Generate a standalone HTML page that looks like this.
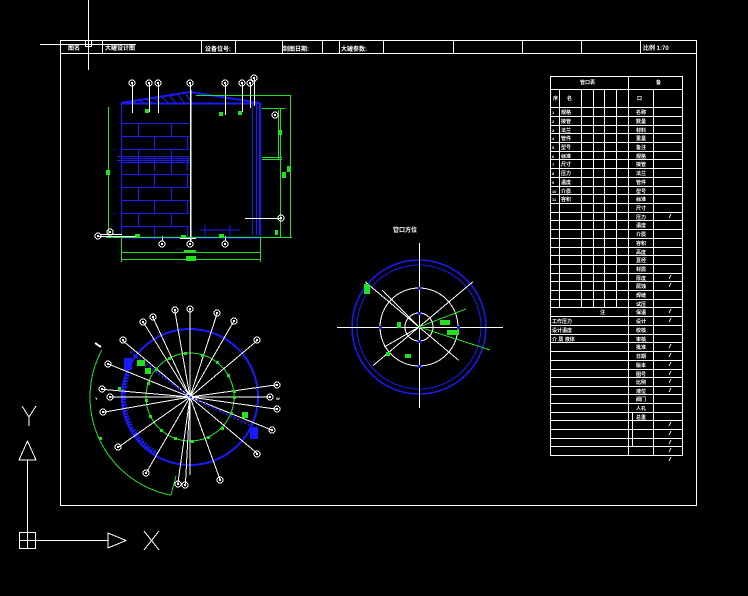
<!DOCTYPE html>
<html><head><meta charset="utf-8">
<style>
html,body{margin:0;padding:0;background:#000;width:748px;height:596px;overflow:hidden}
svg{display:block}
text{font-family:"Liberation Sans","Noto Sans CJK SC",sans-serif;fill:#fff;font-weight:bold}
</style></head>
<body>
<svg id="s" width="748" height="596" viewBox="0 0 748 596" xmlns="http://www.w3.org/2000/svg" shape-rendering="crispEdges">
<g fill="none" stroke="#fff" stroke-width="1">
<rect x="60.5" y="40.5" width="636" height="465"/>
<line x1="60" y1="53.5" x2="697" y2="53.5"/>
<line x1="88.5" y1="0" x2="88.5" y2="70"/>
<line x1="40" y1="44.5" x2="136" y2="44.5"/>
<rect x="85.5" y="40.5" width="6" height="6"/>
<line x1="27.5" y1="460" x2="27.5" y2="532"/>
<rect x="19.5" y="532.5" width="16" height="16"/>
<line x1="19" y1="540.5" x2="36" y2="540.5"/><line x1="27.5" y1="532" x2="27.5" y2="549"/>
<line x1="36" y1="540.5" x2="108" y2="540.5"/>
<path d="M108 533 L126 540.5 L108 548 Z"/>
<path d="M19 460 L27.5 441 L36 460 Z"/>
<path d="M22 406 L29 417 L36 406 M29 417 L29 426"/>
<path d="M144 531 L159 550 M159 531 L144 550"/>
</g>
<g id="g"></g>
<g font-size="6">
<text x="68" y="50">图名</text>
<text x="105" y="50">大罐设计图</text>
<text x="205" y="51">设备位号:</text>
<text x="283" y="51">制图日期:</text>
<text x="341" y="51">大罐参数:</text>
<text x="643" y="50">比例 1:70</text>
<text x="393" y="232">管口方位</text>
</g>
</svg>
<script>
var g=document.getElementById('g'),h='';
function L(a,b,c,d,col,w){h+='<line x1="'+a+'" y1="'+b+'" x2="'+c+'" y2="'+d+'" stroke="'+(col||'#fff')+'" stroke-width="'+(w||1)+'"/>';}
function C(x,y,r,col,w){h+='<circle cx="'+x+'" cy="'+y+'" r="'+r+'" fill="none" stroke="'+col+'" stroke-width="'+(w||1)+'"/>';}
function R(x,y,w,hh,col){h+='<rect x="'+x+'" y="'+y+'" width="'+w+'" height="'+hh+'" fill="'+col+'"/>';}
function T(x,y,s,fs){h+='<text x="'+x+'" y="'+y+'" font-size="'+(fs||5)+'">'+s+'</text>';}
function B(x,y){C(x,y,3,'#fff',1);R(x-1,y-1,2,2,'#fff');}
var W='#fff',BL='#1a1aff',GR='#22e022';
[102,201,235,282,322,339,383,453,522,581,640].forEach(function(x){L(x+.5,40,x+.5,53);});
L(550.5,76.5,682.5,76.5);L(550.5,89.5,682.5,89.5);
var rows=[107];for(var v of [138,164,190,216,242,268,295,321,347,373,400,425,451,478,504,530,556,583,608,634,661,687,712,738,764,791,817,843,869,896,921,947,973,999,1025,1051,1077,1103,1129,1156])rows.push(Math.round(70+v/3));
rows.forEach(function(y){L(550.5,y+.5,682.5,y+.5);});
L(550.5,76,550.5,456);L(682.5,76,682.5,456);L(628.5,76,628.5,456);
var yEnd=Math.round(70+712/3);
[559.5,581.5,593.5,604.5,616.5].forEach(function(x){L(x,89,x,yEnd);});
L(653.5,89,653.5,456);
L(632.5,412,632.5,447);
var lbl=['名称','数量','材料','重量','备注','规格','接管','法兰','管件','型号','标准','尺寸','压力','温度','介质','容积','高度','直径','材质','厚度','腐蚀','焊缝','试压','保温','设计','校核','审核','批准','日期','版本','图号','比例','液位','阀门','人孔','总重'];
for(var i=0;i<rows.length-1&&i<lbl.length;i++){T(636,rows[i]+7,lbl[i],5);}
for(var i=0;i<11;i++){T(552,rows[i]+7,''+(i+1),4);T(561,rows[i]+7,lbl[(i+5)%lbl.length],5);}
[12,19,20,23,24,27,28,29,30,31,32,36,37,38,39,40].forEach(function(i){if(rows[i])L(669,rows[i]+6,671,rows[i]+2);});
T(580,84,'管口表',5);T(656,84,'备',5);T(637,100,'口',5);T(553,100,'序',5);T(567,100,'名',5);
T(600,rows[23]+7,'注',5);T(552,rows[24]+7,'工作压力',5);T(552,rows[25]+7,'设计温度',5);T(552,rows[26]+7,'介 质 液体',5);
L(121,103.5,260,103.5,BL,2);L(121,237.5,260,237.5,BL,2);
L(121.5,103,121.5,238,BL,1);L(260.5,103,260.5,238,BL,1);
h+='<path d="M121 103 L190 92 L260 103" stroke="'+BL+'" fill="none" stroke-width="2"/>';
for(var k=0;k<8;k++){L(130+k*8,101-k,130+k*8+6,103,BL);}
var ys=[123,136,149,158,162,174,187,200,213,226];
ys.forEach(function(y,i){L(121,y+.5,191,y+.5,BL);var off=i%2?0:17;for(var x=121+off;x<191;x+=33)L(x+.5,y,x+.5,y+13,BL);});
L(117,156.5,191,156.5,BL);L(117,160.5,191,160.5,BL);
[252,256,259].forEach(function(x){L(x+.5,103,x+.5,235,BL);});
L(190.5,90,190.5,242,W,1.5);
L(200,230,240,230,BL);L(205,225,205,238,BL);L(230,225,230,238,BL);
L(108.5,107,108.5,238,GR);L(290.5,95,290.5,238,GR);L(280.5,108,280.5,238,GR);L(278.5,110,278.5,160,GR);
L(106,237.5,292,237.5,GR);L(121.5,237,121.5,262,GR);L(260.5,237,260.5,262,GR);
L(121,252.5,260,252.5,GR);L(121,259.5,260,259.5,GR);
L(262,108.5,285,108.5,GR);L(262,157.5,282,157.5,GR);L(262,159.5,282,159.5,GR);
L(196,95.5,291,95.5,GR);
R(106,170,4,5,GR);R(287,166,4,6,GR);R(282,172,4,6,GR);R(278,130,4,5,GR);R(184,250,12,3,GR);R(186,256,10,5,GR);
R(145,109,4,4,GR);R(219,112,4,4,GR);R(238,111,4,4,GR);R(135,234,5,4,GR);R(181,235,5,4,GR);R(219,234,5,4,GR);R(275,230,3,5,GR);
[[132,83,113],[149,83,112],[158,83,113],[190,83,92],[225,83,115],[242,83,112],[250,83,108]].forEach(function(p){L(p[0]+.5,p[1],p[0]+.5,p[2]);B(p[0],p[1]);});
L(254.5,78,254.5,106);B(254,78);
L(245,218.5,281,218.5);B(281,218);B(275,115);
L(101,234.5,122,234.5);B(110,232);L(98,236.5,136,236.5);B(98,236);
B(162,244);B(190,244);B(225,244);L(162.5,236,162.5,241);L(225.5,236,225.5,241);
L(180,238.5,196,238.5);
var cx=190,cy=397;
C(cx,cy,68,BL,2);C(cx,cy,44,GR,1);
function P(r,a){a=a*Math.PI/180;return (cx+r*Math.cos(a))+' '+(cy+r*Math.sin(a));}
h+='<path d="M'+P(100,208)+' A100 100 0 0 0 '+P(100,101)+' L'+P(80,100)+'" fill="none" stroke="'+GR+'"/>';
h+='<path d="M'+P(66,150)+' A66 66 0 0 0 '+P(66,120)+'" fill="none" stroke="'+BL+'" stroke-width="5" stroke-dasharray="2 1"/>';
h+='<path d="M'+P(66,200)+' A66 66 0 0 0 '+P(66,150)+'" fill="none" stroke="'+BL+'" stroke-width="4" stroke-dasharray="2 1"/>';
var angs=[-90,-60,-72,-115,-140,-158,-175,180,170,145,120,98,93,70,40,22,8,-8,-40,-100,-122];
angs.forEach(function(a){var r=a*Math.PI/180,rr=(a==180)?80:88;var x=cx+rr*Math.cos(r),y=cy+rr*Math.sin(r);L(cx,cy,x,y);B(Math.round(x),Math.round(y));});
L(cx,cy,cx+80,cy);B(cx+80,cy);L(cx,cy-80,cx,cy+78);
h+='<line x1="'+(cx-60)+'" y1="'+(cy-45)+'" x2="'+cx+'" y2="'+cy+'" stroke="'+BL+'" stroke-width="2" stroke-dasharray="2 2"/>';
h+='<line x1="'+cx+'" y1="'+cy+'" x2="'+(cx+60)+'" y2="'+(cy+28)+'" stroke="'+BL+'" stroke-width="2" stroke-dasharray="2 2"/>';
R(124,358,8,12,BL);R(250,427,8,12,BL);
for(var a=0;a<360;a+=22){var r=a*Math.PI/180;R(Math.round(cx+44*Math.cos(r))-1,Math.round(cy+44*Math.sin(r))-1,3,3,GR);}
R(137,360,8,6,GR);R(145,368,6,6,GR);R(242,412,6,6,GR);R(118,387,3,3,GR);R(99,437,3,3,GR);
L(95,343,101,347,W,2);
T(95,400,'Y',4);T(276,400,'W',4);
var dx=419,dy=327;
C(dx,dy,67,BL,1.5);C(dx,dy,62,BL,1);C(dx,dy,39,W,1);C(dx,dy,14,W,1);
L(337,dy+.5,503,dy+.5);L(dx+.5,243,dx+.5,408);
[[-40,70],[220,70],[140,60],[-135,52],[40,52],[150,40]].forEach(function(p){var r=p[0]*Math.PI/180;L(dx,dy,dx+p[1]*Math.cos(r),dy+p[1]*Math.sin(r));});
L(dx,dy,490,350,GR);L(dx,dy,466,309,GR);
R(440,320,10,5,GR);R(447,330,12,5,GR);R(364,284,6,10,GR);R(397,322,4,6,GR);R(405,354,6,4,GR);R(386,352,4,4,GR);
[[dx,dy-14],[dx,dy+14],[dx-39,dy],[dx+39,dy],[dx,dy-39],[dx,dy+39]].forEach(function(p){R(p[0]-1,p[1]-1,3,3,BL);});
g.innerHTML=h;
</script>
</body></html>
